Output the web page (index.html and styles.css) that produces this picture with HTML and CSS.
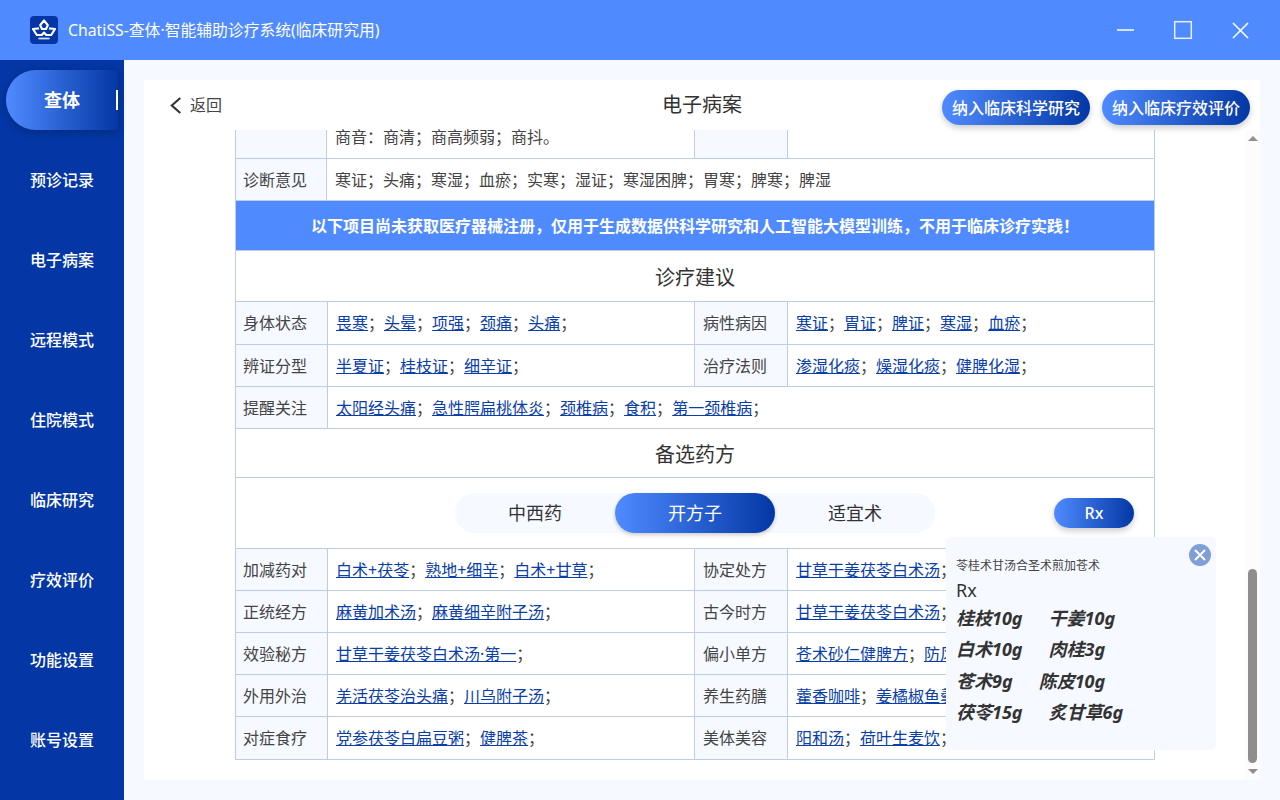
FILE: index.html
```html
<!DOCTYPE html>
<html lang="zh-CN">
<head>
    <meta charset="UTF-8">
    <title>ChatiSS-查体·智能辅助诊疗系统(临床研究用)</title>
    <link rel="stylesheet" href="styles.css">
</head>
<body>
    <!-- Title bar -->
    <header class="titlebar">
        <svg class="logo" viewBox="0 0 28 28">
            <rect width="28" height="28" rx="4" fill="#0437a5"/>
            <path d="M14 4.5l3.8 4.6-1.8 3.9h-4l-1.8-3.9z" fill="none" stroke="#fff" stroke-width="2.2" stroke-linejoin="round"/>
            <path d="M9 12.3l-6 .7 3.8 6h5l2.2-2.4 2.2 2.4h5l3.8-6-6-.7" fill="none" stroke="#fff" stroke-width="2.2" stroke-linejoin="round"/>
            <path d="M8.5 22.5h11" stroke="#cfe0ff" stroke-width="1.8"/>
        </svg>
        <span class="app-name">ChatiSS-查体·智能辅助诊疗系统(临床研究用)</span>
        <div class="window-btns">
            <svg viewBox="0 0 20 20"><path d="M1 10h17" stroke="#fff" stroke-width="1.5"/></svg>
            <svg viewBox="0 0 20 20"><rect x="1.7" y="1.7" width="16.6" height="16.6" fill="none" stroke="#e8f0ff" stroke-width="1.5"/></svg>
            <svg viewBox="0 0 20 20"><path d="M3 3l15 15M18 3L3 18" stroke="#fff" stroke-width="1.5" fill="none"/></svg>
        </div>
    </header>

    <div class="app-body">
        <!-- Sidebar -->
        <nav class="sidebar">
            <a class="nav-item active">查体</a>
            <a class="nav-item">预诊记录</a>
            <a class="nav-item">电子病案</a>
            <a class="nav-item">远程模式</a>
            <a class="nav-item">住院模式</a>
            <a class="nav-item">临床研究</a>
            <a class="nav-item">疗效评价</a>
            <a class="nav-item">功能设置</a>
            <a class="nav-item">账号设置</a>
        </nav>

        <main class="main">
            <div class="card">
                <div class="card-head">
                    <a class="back">
                        <svg viewBox="0 0 12 16"><path d="M10.5 1L2.5 8l8 7" fill="none" stroke="#333" stroke-width="2"/></svg>
                        返回
                    </a>
                    <h1 class="page-title">电子病案</h1>
                    <div class="head-btns">
                        <button class="grad-btn">纳入临床科学研究</button>
                        <button class="grad-btn">纳入临床疗效评价</button>
                    </div>
                </div>

                <div class="scroll-area">
                    <div class="record">
                        <table class="grid top-grid">
                            <colgroup><col class="c-label"><col class="c-value"><col class="c-label-b"><col></colgroup>
                            <tr class="cut-row">
                                <th></th>
                                <td>商音：商清；商高频弱；商抖。</td>
                                <th></th>
                                <td></td>
                            </tr>
                            <tr class="diag-row">
                                <th>诊断意见</th>
                                <td colspan="3">寒证；头痛；寒湿；血瘀；实寒；湿证；寒湿困脾；胃寒；脾寒；脾湿</td>
                            </tr>
                            <tr class="notice-row">
                                <td colspan="4">以下项目尚未获取医疗器械注册，仅用于生成数据供科学研究和人工智能大模型训练，不用于临床诊疗实践！</td>
                            </tr>
                            <tr class="section-row s-first">
                                <td colspan="4">诊疗建议</td>
                            </tr>
                        </table>
                        <table class="grid">
                            <colgroup><col class="c-label"><col class="c-value"><col class="c-label-b"><col></colgroup>
                            <tr class="tall">
                                <th>身体状态</th>
                                <td><a>畏寒</a>；<a>头晕</a>；<a>项强</a>；<a>颈痛</a>；<a>头痛</a>；</td>
                                <th>病性病因</th>
                                <td><a>寒证</a>；<a>胃证</a>；<a>脾证</a>；<a>寒湿</a>；<a>血瘀</a>；</td>
                            </tr>
                            <tr>
                                <th>辨证分型</th>
                                <td><a>半夏证</a>；<a>桂枝证</a>；<a>细辛证</a>；</td>
                                <th>治疗法则</th>
                                <td><a>渗湿化痰</a>；<a>燥湿化痰</a>；<a>健脾化湿</a>；</td>
                            </tr>
                            <tr>
                                <th>提醒关注</th>
                                <td colspan="3"><a>太阳经头痛</a>；<a>急性腭扁桃体炎</a>；<a>颈椎病</a>；<a>食积</a>；<a>第一颈椎病</a>；</td>
                            </tr>
                            <tr class="section-row s-second">
                                <td colspan="4">备选药方</td>
                            </tr>
                            <tr class="tabs-row">
                                <td colspan="4">
                                    <div class="tabs-wrap">
                                        <div class="tabs">
                                            <span class="tab">中西药</span>
                                            <span class="tab active">开方子</span>
                                            <span class="tab">适宜术</span>
                                        </div>
                                        <button class="grad-btn rx-btn">Rx</button>
                                    </div>
                                </td>
                            </tr>
                            <tr>
                                <th>加减药对</th>
                                <td><a>白术+茯苓</a>；<a>熟地+细辛</a>；<a>白术+甘草</a>；</td>
                                <th>协定处方</th>
                                <td><a>甘草干姜茯苓白术汤</a>；</td>
                            </tr>
                            <tr>
                                <th>正统经方</th>
                                <td><a>麻黄加术汤</a>；<a>麻黄细辛附子汤</a>；</td>
                                <th>古今时方</th>
                                <td><a>甘草干姜茯苓白术汤</a>；</td>
                            </tr>
                            <tr>
                                <th>效验秘方</th>
                                <td><a>甘草干姜茯苓白术汤·第一</a>；</td>
                                <th>偏小单方</th>
                                <td><a>苍术砂仁健脾方</a>；<a>防风</a></td>
                            </tr>
                            <tr>
                                <th>外用外治</th>
                                <td><a>羌活茯苓治头痛</a>；<a>川乌附子汤</a>；</td>
                                <th>养生药膳</th>
                                <td><a>藿香咖啡</a>；<a>姜橘椒鱼羹</a></td>
                            </tr>
                            <tr class="tall">
                                <th>对症食疗</th>
                                <td><a>党参茯苓白扁豆粥</a>；<a>健脾茶</a>；</td>
                                <th>美体美容</th>
                                <td><a>阳和汤</a>；<a>荷叶生麦饮</a>；</td>
                            </tr>
                        </table>
                    </div>
                    <!-- Scrollbar -->
                    <div class="scrollbar">
                        <span class="arrow-up"></span>
                        <span class="thumb"></span>
                        <span class="arrow-down"></span>
                    </div>
                </div>

                <!-- Prescription popup -->
                <aside class="rx-popup">
                    <svg class="rx-close" viewBox="0 0 22 22">
                        <circle cx="11" cy="11" r="11" fill="#7f9fd6"/>
                        <path d="M6 6l10 10M16 6L6 16" stroke="#fff" stroke-width="2"/>
                    </svg>
                    <div class="rx-name">苓桂术甘汤合圣术煎加苍术</div>
                    <div class="rx-mark">Rx</div>
                    <div class="rx-line"><span>桂枝10g</span><span>干姜10g</span></div>
                    <div class="rx-line"><span>白术10g</span><span>肉桂3g</span></div>
                    <div class="rx-line"><span>苍术9g</span><span>陈皮10g</span></div>
                    <div class="rx-line"><span>茯苓15g</span><span>炙甘草6g</span></div>
                </aside>
            </div>
        </main>
    </div>
</body>
</html>
```

FILE: styles.css
```css
/* Reset and Base Styles */
* {
    margin: 0;
    padding: 0;
    box-sizing: border-box;
}

body {
    width: 1280px;
    height: 800px;
    overflow: hidden;
    font-family: "Noto Sans", "Noto Sans CJK SC", sans-serif;
    color: #333;
    background-color: #f6f9ff;
}

button {
    font-family: inherit;
    border: none;
}

/* Title Bar */
.titlebar {
    height: 60px;
    display: flex;
    align-items: center;
    padding-left: 30px;
    background-color: #4f8bff;
}

.logo {
    width: 28px;
    height: 28px;
}

.app-name {
    margin-left: 10px;
    color: #fff;
    font-size: 15.8px;
    line-height: 20px;
}

.window-btns {
    margin-left: auto;
    display: flex;
    align-items: center;
    gap: 37px;
    padding-right: 30px;
}

.window-btns svg {
    width: 20px;
    height: 20px;
}

/* Sidebar */
.app-body {
    height: 740px;
    display: flex;
}

.sidebar {
    width: 124px;
    padding: 10px 0 0 6px;
    background-color: #0437a5;
}

.nav-item {
    display: flex;
    align-items: center;
    justify-content: center;
    height: 60px;
    width: 112px;
    margin-bottom: 20px;
    color: #fff;
    font-size: 16px;
    line-height: 20px;
    font-weight: 500;
}

.nav-item.active {
    position: relative;
    border-radius: 30px 4px 4px 30px;
    font-size: 18px;
    font-weight: 700;
    background: linear-gradient(90deg, #4f8bff, #0437a5);
    box-shadow: 0 2px 8px rgba(0, 0, 0, 0.25);
}

.nav-item.active::after {
    content: "";
    position: absolute;
    right: 0;
    top: 20px;
    width: 2px;
    height: 20px;
    background-color: #fff;
}

/* Main Card */
.main {
    flex: 1;
    padding: 20px;
}

.card {
    position: relative;
    height: 700px;
    display: flex;
    flex-direction: column;
    background-color: #fff;
}

.card-head {
    position: relative;
    height: 50px;
    display: flex;
    align-items: center;
    justify-content: center;
    flex-shrink: 0;
}

.back {
    position: absolute;
    left: 25px;
    top: 15px;
    display: flex;
    align-items: center;
    gap: 8px;
    font-size: 16px;
    line-height: 20px;
    color: #444;
}

.back svg {
    width: 13px;
    height: 17px;
}

.page-title {
    font-size: 20px;
    line-height: 50px;
    font-weight: 400;
    color: #333;
}

.head-btns {
    position: absolute;
    right: 10px;
    top: 10px;
    display: flex;
    gap: 12px;
}

.grad-btn {
    height: 35px;
    width: 148px;
    border-radius: 18px;
    color: #fff;
    font-size: 16px;
    line-height: 20px;
    font-weight: 500;
    background: linear-gradient(90deg, #4f8bff, #0437a5);
    box-shadow: 0 3px 6px rgba(0, 0, 0, 0.2);
}

/* Scroll Area */
.scroll-area {
    flex: 1;
    display: flex;
    min-height: 0;
}

.record {
    width: 920px;
    margin-left: 91px;
}

.grid {
    width: 920px;
    table-layout: fixed;
    border-collapse: collapse;
    font-size: 16px;
    line-height: 20px;
    color: #444;
}

.grid + .grid {
    margin-top: -1px;
}

.grid th,
.grid td {
    border: 1px solid #bccde9;
    height: 42px;
    padding: 0 8px;
    text-align: left;
    font-weight: 400;
    white-space: nowrap;
    overflow: hidden;
}

.grid th {
    background-color: #f6f9ff;
}

.grid th:first-child {
    padding-left: 7px;
}

.grid .tall th,
.grid .tall td {
    height: 43px;
}

.c-label {
    width: 92px;
}

.c-value {
    width: 367px;
}

.c-label-b {
    width: 93px;
}

.top-grid .c-label {
    width: 91px;
}

.top-grid .c-value {
    width: 368px;
}

.grid a {
    color: #0a3ea8;
    text-decoration: underline;
}

.grid .cut-row th,
.grid .cut-row td {
    height: 28px;
    border-top: none;
    vertical-align: bottom;
    padding-bottom: 14px;
    line-height: 14px;
    overflow: visible;
}

.grid .notice-row td {
    height: 50px;
    text-align: center;
    color: #fff;
    font-weight: 700;
    background-color: #4f8bff;
}

.grid .section-row td {
    text-align: center;
    font-size: 20px;
    color: #333;
}

.grid .s-first td {
    height: 51px;
    padding-top: 3px;
}

.grid .s-second td {
    height: 49px;
    padding-top: 3px;
}

/* Tabs */
.grid .tabs-row td {
    height: 71px;
    padding: 0;
}

.tabs-wrap {
    display: flex;
    align-items: center;
    padding-left: 219px;
}

.tabs {
    width: 480px;
    height: 40px;
    display: flex;
    border-radius: 20px;
    background-color: #f6f9ff;
}

.tab {
    flex: 1;
    display: flex;
    align-items: center;
    justify-content: center;
    font-size: 18px;
    color: #333;
}

.tab.active {
    border-radius: 20px;
    color: #fff;
    background: linear-gradient(90deg, #4f8bff, #0437a5);
    box-shadow: 0 2px 4px rgba(0, 0, 0, 0.2);
}

.rx-btn {
    width: 80px;
    height: 30px;
    margin-left: 119px;
}

/* Scrollbar */
.scrollbar {
    width: 15px;
    margin-left: 90px;
    display: flex;
    flex-direction: column;
    align-items: center;
    background-color: #fcfcfc;
    flex-shrink: 0;
}

.arrow-up {
    margin-top: 6px;
    border-left: 5px solid transparent;
    border-right: 5px solid transparent;
    border-bottom: 5px solid #8e8e8e;
}

.thumb {
    width: 9px;
    height: 194px;
    margin-top: 428px;
    border-radius: 5px;
    background-color: #8e8e8e;
}

.arrow-down {
    margin-top: 6px;
    border-left: 5px solid transparent;
    border-right: 5px solid transparent;
    border-top: 5px solid #8e8e8e;
}

/* Prescription Popup */
.rx-popup {
    position: absolute;
    left: 802px;
    top: 457px;
    width: 270px;
    height: 213px;
    padding: 20px 10px 0;
    border-radius: 5px;
    background-color: #f6f9ff;
}

.rx-close {
    position: absolute;
    right: 5px;
    top: 7px;
    width: 22px;
    height: 22px;
}

.rx-name {
    font-size: 12px;
    line-height: 18px;
    color: #444;
}

.rx-mark {
    margin: 2px 0 -1px;
    font-size: 18px;
    line-height: 26px;
    color: #333;
}

.rx-line {
    display: flex;
    gap: 26px;
    height: 31.5px;
    align-items: center;
    font-size: 18px;
    line-height: 24px;
    font-weight: 700;
    font-style: italic;
    color: #333;
}
```
